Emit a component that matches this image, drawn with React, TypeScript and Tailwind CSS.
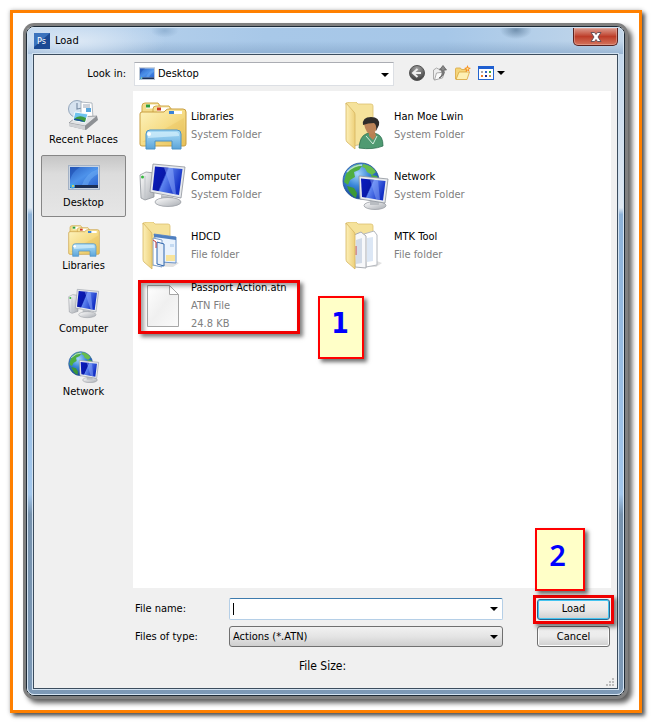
import type { ReactNode } from "react";

type IconProps = { className?: string };

function Gradients() {
  return (
    <svg width="0" height="0" className="absolute" aria-hidden="true">
      <defs>
        <linearGradient id="folder" x1="0" y1="0" x2="1" y2="1">
          <stop offset="0" stopColor="#fdf3bd" />
          <stop offset="0.5" stopColor="#f6dd88" />
          <stop offset="1" stopColor="#e6bf57" />
        </linearGradient>
        <linearGradient id="flap" x1="0" y1="0" x2="1" y2="0">
          <stop offset="0" stopColor="#fdf0b8" />
          <stop offset="1" stopColor="#edd07a" />
        </linearGradient>
        <linearGradient id="stand" x1="0" y1="0" x2="0" y2="1">
          <stop offset="0" stopColor="#a9dbf5" />
          <stop offset="0.5" stopColor="#86c3ea" />
          <stop offset="1" stopColor="#5ba4d8" />
        </linearGradient>
        <linearGradient id="screen" x1="0" y1="0" x2="1" y2="0.4">
          <stop offset="0" stopColor="#0a1cc0" />
          <stop offset="0.45" stopColor="#0818a8" />
          <stop offset="0.5" stopColor="#5d84f0" />
          <stop offset="1" stopColor="#1330c4" />
        </linearGradient>
        <linearGradient id="metal" x1="0" y1="0" x2="1" y2="1">
          <stop offset="0" stopColor="#ffffff" />
          <stop offset="1" stopColor="#a9adb3" />
        </linearGradient>
        <radialGradient id="globe" cx="0.4" cy="0.3" r="0.75">
          <stop offset="0" stopColor="#a5d6fa" />
          <stop offset="0.45" stopColor="#3a86d8" />
          <stop offset="1" stopColor="#123a90" />
        </radialGradient>
        <linearGradient id="desk" x1="0" y1="0" x2="1" y2="1">
          <stop offset="0" stopColor="#2b62c4" />
          <stop offset="0.5" stopColor="#4d92ea" />
          <stop offset="1" stopColor="#2c66d2" />
        </linearGradient>
        <linearGradient id="paper" x1="0" y1="0" x2="1" y2="1">
          <stop offset="0" stopColor="#ffffff" />
          <stop offset="0.5" stopColor="#f0f0f0" />
          <stop offset="1" stopColor="#fafafa" />
        </linearGradient>
        <radialGradient id="back" cx="0.5" cy="0.25" r="0.75">
          <stop offset="0" stopColor="#a4a4a4" />
          <stop offset="1" stopColor="#3c3c3c" />
        </radialGradient>
      </defs>
    </svg>
  );
}

function LibrariesIcon({ className }: IconProps) {
  return (
    <svg viewBox="0 0 48 48" className={className} aria-hidden="true">
      <path d="M3 4q0-3 3-3h13l3 4v38H3z" fill="#f3dc8c" stroke="#cfa94c" strokeWidth="1" />
      <rect x="7" y="2.500" width="12" height="4" fill="#fff" />
      <rect x="7" y="2.500" width="4" height="3" fill="#2f9e3c" />
      <path d="M14 7q0-3 3-3h13l3 4v35H14z" fill="#f6e196" stroke="#cfa94c" strokeWidth="1" />
      <rect x="18" y="5.500" width="12" height="4" fill="#fff" />
      <rect x="18" y="5.500" width="4" height="3" fill="#d03a1e" />
      <path d="M1 12q0-2 2-2h22l2-2q1-1 3-1h14q3 0 3 3v32q0 2-2 2H3q-2 0-2-2z" fill="url(#folder)" stroke="#c99f42" strokeWidth="1" />
      <rect x="30" y="9" width="13" height="3" fill="#fff" />
      <rect x="30" y="9" width="5" height="3" fill="#3a83d8" />
      <path d="M3 40L45 16v25z" fill="#e8c158" opacity="0.35" />
      <path d="M7 47V32q0-4 4-4h27q4 0 4 4v15h-9v-8H16v8z" fill="url(#stand)" stroke="#4b93c8" strokeWidth="1" />
      <path d="M9 36v-3q0-3 3-3h25q3 0 3 3v1z" fill="#d4effc" opacity="0.7" />
      <circle cx="10" cy="32" r="2" fill="#fff" />
    </svg>
  );
}

function ComputerIcon({ className }: IconProps) {
  return (
    <svg viewBox="0 0 48 48" className={className} aria-hidden="true">
      <path d="M1 13l6-3 8 1v24l-9 3-4-2z" fill="url(#metal)" stroke="#8f949b" strokeWidth="0.800" />
      <path d="M6 14v23" stroke="#c0c4c9" />
      <circle cx="3.500" cy="15" r="1.500" fill="#35b93c" />
      <path d="M22 33l12 2v6H22z" fill="#b9bdc2" />
      <ellipse cx="29" cy="40" rx="13" ry="4.500" fill="url(#metal)" stroke="#9a9ea5" strokeWidth="0.800" />
      <path d="M14 2l32 3-4 31-31-6z" fill="#e5e8ec" stroke="#8e939b" strokeWidth="0.800" />
      <path d="M16 4.500l27.500 2.500-3.500 26-26.500-5z" fill="url(#screen)" />
      <path d="M25 5.500l9 .8 3 26-3-.6z" fill="#8aa8fa" opacity="0.55" />
    </svg>
  );
}

function NetworkIcon({ className }: IconProps) {
  return (
    <svg viewBox="0 0 48 48" className={className} aria-hidden="true">
      <circle cx="19" cy="19" r="18" fill="url(#globe)" stroke="#1f4f94" strokeWidth="0.800" />
      <path d="M4 12q5-8 12-10l4 2-3 4-5 2 1 5-5 3-2 5-4-3z" fill="#4fae3f" />
      <path d="M21 2q9 1 13 8l-4 3-5-3-2-4-3-1z" fill="#67bd4c" />
      <path d="M5 24l7 2 3 5-1 5q-7-4-9-12z" fill="#3c9836" />
      <path d="M29 13l6 1 2 5-5 2z" fill="#4fae3f" />
      <path d="M5 10Q12 3 20 3" stroke="#e1f4ff" strokeWidth="1.500" fill="none" opacity="0.7" />
      <ellipse cx="33" cy="43.500" rx="11" ry="4" fill="url(#metal)" stroke="#9a9ea5" strokeWidth="0.800" />
      <path d="M28 37h9v6h-9z" fill="#b9bdc2" />
      <path d="M17 14l29 3-3 24-25-4z" fill="#e9ecef" stroke="#8e939b" strokeWidth="0.800" />
      <path d="M19 16.500l24.500 2.500L41 38.500 20 35z" fill="url(#screen)" />
      <path d="M28 17.500l8 .8 2 19.500-4-.6z" fill="#8aa8fa" opacity="0.5" />
    </svg>
  );
}

function DesktopIcon({ className }: IconProps) {
  return (
    <svg viewBox="0 0 32 32" className={className} aria-hidden="true">
      <rect x="0.500" y="3.500" width="31" height="24" fill="#c9d4e2" stroke="#a3b1c4" />
      <rect x="2" y="5" width="28" height="18" fill="url(#desk)" />
      <path d="M2 5h10Q4 10 2 18z" fill="#1e4fb0" opacity="0.6" />
      <path d="M14 23q4-12 16-16v5q-8 4-10 11z" fill="#6fb0f6" opacity="0.5" />
      <rect x="2" y="23" width="28" height="3" fill="#1b2f55" />
      <circle cx="4.500" cy="24" r="2.500" fill="#3fa8e8" />
      <circle cx="5" cy="24" r="1" fill="#f6d749" />
    </svg>
  );
}

function RecentIcon({ className }: IconProps) {
  return (
    <svg viewBox="0 0 32 32" className={className} aria-hidden="true">
      <circle cx="9" cy="10" r="8.500" fill="#d6e2ef" stroke="#94a6bb" />
      <path d="M9 4v6l5-1" stroke="#7c90a8" strokeWidth="1.200" fill="none" />
      <path d="M13 3l11 1 1 15-12-1z" fill="#fff" stroke="#9fa8b2" strokeWidth="0.800" />
      <path d="M15 6h7M15 8h7M15 15h3" stroke="#8e9aab" strokeWidth="0.900" />
      <rect x="18" y="9" width="5" height="4" fill="#5aa6dc" />
      <path d="M1 24l7-6 21-1 1 4-12 10L1 27z" fill="#8e9195" />
      <path d="M1 24l7-6 21-1-12 10z" fill="#e2e4e6" stroke="#7f8388" strokeWidth="0.600" />
      <path d="M1 24v3l16 4v-4z" fill="#cfd1d4" />
      <path d="M7 13l13 2-3 9-12-3z" fill="#6fc3ef" stroke="#fff" strokeWidth="0.900" />
      <path d="M6 20q5-5 12-1l-1 4-11-2z" fill="#3f9a3c" />
      <path d="M6 20q4-1 11 3l-11-2z" fill="#1f4fa0" />
    </svg>
  );
}

function OpenFolder({ className, children }: IconProps & { children: ReactNode }) {
  return (
    <svg viewBox="0 0 48 48" className={className} aria-hidden="true">
      <path d="M4 1l5-1h5l2 2h13q2 0 2 2v34L12 44z" fill="#f5e29b" stroke="#dcc070" strokeWidth="0.800" />
      <path d="M12 44l22 1 6-4-8-3z" fill="#c4c4c4" opacity="0.5" />
      {children}
      <path d="M4 1l8 9q1 1 1 3v34L5 40q-1-1-1-3z" fill="url(#flap)" stroke="#d6b560" strokeWidth="0.800" />
    </svg>
  );
}

function UserFolderIcon({ className }: IconProps) {
  return (
    <OpenFolder className={className}>
      <path d="M17 46q1-12 7-14l5-2 6 2q6 2 6 12-10 4-24 2z" fill="#4f9a72" stroke="#2d7150" strokeWidth="0.800" />
      <path d="M27 30h6l1 4-3 4-4-4z" fill="#b98052" />
      <path d="M22 22q0-5 6-5 7 0 7 6 0 8-6 9-5 0-7-10z" fill="#bd8458" />
      <path d="M21 23q-1-8 8-8 9 0 8 8l-3 6q1-6-2-8-6 0-11 2z" fill="#2f2c2a" />
      <path d="M24 34l7 8 4-8" stroke="#d4eede" fill="none" />
    </OpenFolder>
  );
}

function DocumentsFolderIcon({ className }: IconProps) {
  return (
    <OpenFolder className={className}>
      <path d="M15 12l22 3v26l-15-1z" fill="#eaf3fd" stroke="#6b93c8" />
      <path d="M15 12l22 3v3l-22-3z" fill="#4e7fc0" />
      <rect x="31" y="22" width="4" height="3" fill="#c4daf2" />
      <path d="M27 33h9v6h-9z" fill="#f8e49b" />
      <path d="M14 16l9 2v27l-9-2z" fill="#fff" stroke="#7a9cc9" />
      <path d="M18 20l7 2v22l-7-2z" fill="#e6eef8" stroke="#2e66ae" />
      <path d="M14 18l3 2v6" stroke="#c23d3d" fill="none" />
    </OpenFolder>
  );
}

function PapersFolderIcon({ className }: IconProps) {
  return (
    <OpenFolder className={className}>
      <path d="M22 12l10-3 3 4v30l-11 2z" fill="#fff" stroke="#b4b8be" />
      <path d="M25 16l6-1v24l-6 1z" fill="#dce7f5" />
      <path d="M12 13l7-3 5 4v32l-11-1z" fill="#f7f8fa" stroke="#a9adb3" />
      <path d="M14 18l6-2v25l-6 1z" fill="#d2dbe8" />
      <path d="M14 24v9" stroke="#cc4a4a" />
    </OpenFolder>
  );
}

function FileIcon({ className }: IconProps) {
  return (
    <svg viewBox="0 0 48 48" className={className} aria-hidden="true">
      <path d="M8.500 3.500h22l9 9v32h-31z" fill="url(#paper)" stroke="#a6a6a6" />
      <path d="M30.500 3.500v9h9z" fill="#fff" stroke="#a6a6a6" />
    </svg>
  );
}

function Caret({ className }: IconProps) {
  return (
    <svg viewBox="0 0 8 4" className={`h-1 w-2 ${className ?? ""}`} aria-hidden="true">
      <path d="M0 0h8L4 4z" fill="#000" />
    </svg>
  );
}

const places = [
  { label: "Recent Places", Icon: RecentIcon },
  { label: "Desktop", Icon: DesktopIcon, active: true },
  { label: "Libraries", Icon: LibrariesIcon },
  { label: "Computer", Icon: ComputerIcon },
  { label: "Network", Icon: NetworkIcon },
];

const entries = [
  { name: "Libraries", lines: ["System Folder"], Icon: LibrariesIcon },
  { name: "Han Moe Lwin", lines: ["System Folder"], Icon: UserFolderIcon },
  { name: "Computer", lines: ["System Folder"], Icon: ComputerIcon },
  { name: "Network", lines: ["System Folder"], Icon: NetworkIcon },
  { name: "HDCD", lines: ["File folder"], Icon: DocumentsFolderIcon },
  { name: "MTK Tool", lines: ["File folder"], Icon: PapersFolderIcon },
  { name: "Passport Action.atn", lines: ["ATN File", "24.8 KB"], Icon: FileIcon, marked: true },
];

function TitleBar() {
  return (
    <header className="-mx-[5px] flex h-[26px] items-center rounded-t-[6px] bg-[radial-gradient(ellipse_16px_9px_at_82%_8%,#7291af,transparent),radial-gradient(ellipse_14px_7px_at_23%_10%,#92b3d4,transparent),radial-gradient(ellipse_90px_24px_at_8%_50%,#dce8f5,transparent),linear-gradient(to_bottom,transparent_50%,#7fa0c499),linear-gradient(to_right,#bdd5ee,#a8c8e8_40%,#a6c7e8_70%,#c3d7ea)] px-[5px]">
      <svg viewBox="0 0 16 16" className="mx-[1px] size-4" aria-hidden="true">
        <rect width="16" height="16" fill="#1b4a94" />
        <path d="M0 0h16L0 14z" fill="#3b73bd" />
        <text x="3" y="11" fontSize="9" fill="#fff" fontFamily="DejaVu Sans Condensed, sans-serif">Ps</text>
      </svg>
      <h1 className="ml-1 flex-1">Load</h1>
      <button
        type="button"
        aria-label="Close"
        className="flex h-[18px] w-[45px] items-center justify-center self-start rounded-b-[5px] border border-t-0 border-[#5a2220] bg-linear-to-b from-[#dc9c90] via-[#bd3c28] via-50% to-[#d4735c] shadow-[inset_0_0_0_1px_#e8b5aa80]"
      >
        <svg viewBox="0 0 12 10" className="h-[10px] w-3" aria-hidden="true">
          <path d="M1 .5h3.500L6 2.500 7.500.5H11L8 5l3 4.500H7.500L6 7.500 4.500 9.500H1L4 5z" fill="#fff" stroke="#5c4a52" strokeWidth="0.900" />
        </svg>
      </button>
    </header>
  );
}

function Toolbar() {
  return (
    <div className="flex items-center pt-[7px] pb-[5px]">
      <label htmlFor="look-in" className="w-[100px] pr-2 text-right">Look in:</label>
      <div className="relative w-[260px]">
        <DesktopIcon className="pointer-events-none absolute top-1 left-[5px] size-4" />
        <select id="look-in" className="h-6 w-full appearance-none border border-[#dcdfe4] border-t-[#abadb3] bg-white pl-[23px]">
          <option>Desktop</option>
        </select>
        <Caret className="pointer-events-none absolute top-[11px] right-[5px]" />
      </div>
      <div className="ml-[15px] flex items-center gap-[7px] pb-[2px]">
        <button type="button" aria-label="Back">
          <svg viewBox="0 0 16 16" className="size-4" aria-hidden="true">
            <circle cx="8" cy="8" r="7.500" fill="url(#back)" stroke="#555" />
            <path d="M8.500 4L4 8l4.500 4" stroke="#eee" strokeWidth="2" fill="none" />
            <path d="M4.500 8H12" stroke="#eee" strokeWidth="2" />
          </svg>
        </button>
        <button type="button" aria-label="Up one level">
          <svg viewBox="0 0 16 16" className="size-4" aria-hidden="true">
            <path d="M1.500 5l3-2 2 1h3v8l-7 3-1-1z" fill="#eee" stroke="#999" strokeWidth="0.800" />
            <path d="M2.500 15l2-7 8-1-2 6z" fill="#fafafa" stroke="#999" strokeWidth="0.800" />
            <path d="M7 13q4-2 3-8H7.500L11 .5 14.500 5H12q1 6-5 8z" fill="#888" stroke="#555" strokeWidth="0.700" />
          </svg>
        </button>
        <button type="button" aria-label="Create new folder">
          <svg viewBox="0 0 16 16" className="size-4" aria-hidden="true">
            <path d="M.5 14V4q0-1 1-1h4l1 1.500h5V14z" fill="#f4d57a" stroke="#d9a63c" strokeWidth="0.800" />
            <path d="M1 14.500L4 7h10.500L12 14.500z" fill="#fdf0b4" stroke="#d9a63c" strokeWidth="0.800" />
            <path d="M12.500 0l1 2.500 2.500.5-2 1.500.5 2.500-2-1.500L10.500 7l.5-2.500L9 3l2.500-.5z" fill="#f79020" />
            <circle cx="12.500" cy="3.700" r="1" fill="#ffe9a0" />
          </svg>
        </button>
        <button type="button" aria-label="View menu" className="flex items-center gap-[3px]">
          <svg viewBox="0 0 16 14" className="h-[14px] w-4" aria-hidden="true">
            <rect x="0.500" y="0.500" width="15" height="13" fill="#fff" stroke="#2365d0" />
            <rect width="16" height="3" fill="#1f5fd0" />
            <path d="M3 5h2v2H3z" fill="#aaa" />
            <path d="M7 5h2v2H7z" fill="#2f66c8" />
            <path d="M11 5h2v2h-2z" fill="#38a83a" />
            <path d="M3 9h2v2H3z" fill="#ee7d25" />
            <path d="M7 9h2v2H7z" fill="#1c2c8c" />
            <path d="M11 9h2v2h-2z" fill="#c59a48" />
          </svg>
          <Caret />
        </button>
      </div>
    </div>
  );
}

function PlacesBar() {
  return (
    <nav className="flex w-[99px] flex-col gap-[1px] pt-[1px] pr-[7px] pl-[7px]">
      {places.map(({ label, Icon, active }) => (
        <button
          key={label}
          type="button"
          className={`flex h-[62px] flex-col items-center border pt-[6px] ${
            active
              ? "rounded-[2px] border-[#868686] bg-linear-to-b from-[#c6c6c6] via-[#dcdcdc] via-30% to-[#e6e6e6]"
              : "border-transparent"
          }`}
        >
          <Icon className="size-8" />
          <span className="leading-[18px]">{label}</span>
        </button>
      ))}
    </nav>
  );
}

function FileList() {
  return (
    <section aria-label="Files" className="relative mr-[6px] flex-1 bg-white pt-[5px] pl-[6px]">
      <ul className="grid grid-cols-[203px_203px]">
        {entries.map(({ name, lines, Icon, marked }) => (
          <li key={name} className="relative flex h-[60px] items-center gap-1">
            <Icon className="size-12" />
            <div className="leading-[18px]">
              <p>{name}</p>
              {lines.map((line) => (
                <p key={line} className="text-[#808080]">{line}</p>
              ))}
            </div>
            {marked && (
              <span className="absolute top-1 -left-[1px] h-[54px] w-[162px] border-3 border-[#f00000] shadow-[3px_3px_4px_#00000080,inset_3px_3px_4px_#00000060]" />
            )}
          </li>
        ))}
      </ul>
      <span className="absolute top-[205px] left-[185px] flex h-[63px] w-[46px] justify-center border-2 border-[#ff0000] bg-[#ffffc8] pt-[10px] pr-[2px] text-[28px] leading-8 font-bold text-[#0000ff] shadow-[3px_3px_4px_#00000090]">
        1
      </span>
    </section>
  );
}

const pushButton =
  "h-[21px] w-full rounded-[3px] border bg-linear-to-b from-[#f2f2f2] via-[#ebebeb] via-50% to-[#cfcfcf]";

function FileForm() {
  return (
    <form className="pt-[10px] pr-[7px] pl-[101px]" onSubmit={(event) => event.preventDefault()}>
      <div className="grid grid-cols-[94px_1fr_73px] items-center gap-y-[6px]">
        <label htmlFor="file-name">File name:</label>
        <div className="relative mr-[34px]">
          <input id="file-name" type="text" className="block h-[22px] w-full rounded-[2px] border border-[#b5cfe7] border-t-[#3d7bad] bg-white px-1" />
          <span className="absolute top-[5px] left-1 h-3 w-[1px] bg-black" />
          <Caret className="absolute top-[9px] right-[5px]" />
        </div>
        <div className="relative">
          <button type="submit" className={`${pushButton} block border-[#2c628b] shadow-[inset_0_0_0_1px_#45c4f0]`}>Load</button>
          <span className="pointer-events-none absolute -inset-1 border-3 border-[#f00000] shadow-[3px_3px_4px_#00000080]" />
          <span className="absolute -top-[71px] -left-[2px] flex h-[63px] w-[50px] justify-center border-2 border-[#ff0000] bg-[#ffffc8] pt-[9px] pr-[5px] font-['Noto_Sans',sans-serif] text-[29px] leading-8 font-semibold text-[#0000ff] shadow-[3px_3px_4px_#00000090]">
            2
          </span>
        </div>
        <label htmlFor="file-type">Files of type:</label>
        <div className="relative mr-[34px]">
          <select id="file-type" className="block h-[21px] w-full appearance-none rounded-[3px] border border-[#707070] bg-linear-to-b from-[#f2f2f2] via-[#e4e4e4] via-50% to-[#cfcfcf] pl-[3px]">
            <option>Actions (*.ATN)</option>
          </select>
          <Caret className="pointer-events-none absolute top-[9px] right-[5px]" />
        </div>
        <button type="button" className={`${pushButton} border-[#707070] shadow-[inset_0_0_0_1px_#fcfcfc]`}>Cancel</button>
      </div>
    </form>
  );
}

export default function App() {
  return (
    <main className="flex min-h-screen bg-white pt-[10px] pr-[11px] pb-[11px] pl-[10px] font-['DejaVu_Sans_Condensed','DejaVu_Sans',sans-serif] text-[11px] leading-4 text-black">
      <Gradients />
      <div className="flex flex-1 border-3 border-[#ff8000] pt-[13px] pr-[14px] pb-[14px] pl-[13px] shadow-[3px_3px_4px_#000000a0,0_0_4px_#00000040]">
        <div className="flex flex-1 rounded-[8px] border border-[#1d2a36] shadow-[0_0_0_3px_#808080,4px_4px_5px_3px_#000000a0]">
          <div className="flex flex-1 flex-col rounded-[7px] border border-[#d3e3f2] bg-[linear-gradient(to_bottom,#c0d6ec,#dfe8f1_27%,#8db2d8_28%,#a3c7ec_70%,#7792ad_73%,#7d99b6)] px-[5px] pb-[5px]">
            <TitleBar />
            <div className="flex flex-1 flex-col border border-[#3c4d5e] bg-[#f0f0f0] shadow-[0_0_0_1px_#d3e3f2]">
              <Toolbar />
              <div className="flex flex-1">
                <PlacesBar />
                <FileList />
              </div>
              <FileForm />
              <div className="relative pt-[11px] pr-[6px] pb-[14px] text-center text-xs">
                File Size:
                <svg viewBox="0 0 8 8" className="absolute right-[3px] bottom-[2px] size-2" aria-hidden="true">
                  <path d="M6 0h2v2H6zM3 3h2v2H3zM6 3h2v2H6zM0 6h2v2H0zM3 6h2v2H3zM6 6h2v2H6z" fill="#bcbcbc" />
                </svg>
              </div>
            </div>
          </div>
        </div>
      </div>
    </main>
  );
}
